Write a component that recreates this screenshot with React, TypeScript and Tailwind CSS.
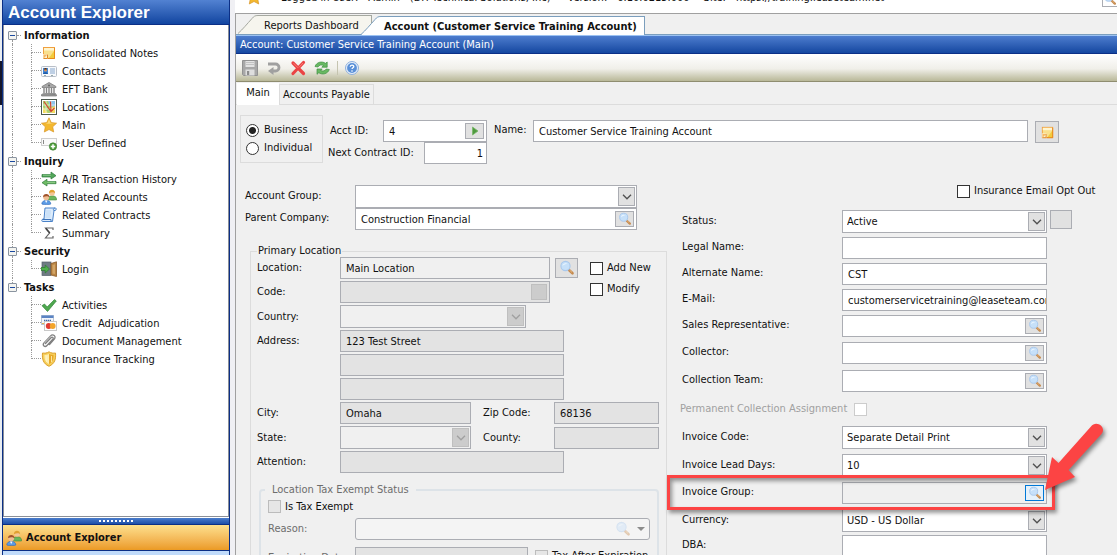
import React, { type ReactNode } from "react";

/* ---------- icons ---------- */

function Svg({ children, className = "size-4", box = "0 0 16 16" }: { children: ReactNode; className?: string; box?: string }) {
  return (
    <svg viewBox={box} className={`${className} shrink-0`} fill="none" aria-hidden="true">
      {children}
    </svg>
  );
}

const NoteIcon = ({ className }: { className?: string }) => (
  <Svg className={className}>
    <rect x="2" y="2" width="12" height="12" fill="#f0a040" />
    <rect x="3" y="3" width="10" height="10" fill="#f9e08c" />
    <rect x="3" y="3" width="10" height="2.5" fill="#fff5cf" />
    <path d="M13 6v7H8z" fill="#f2cb3c" />
    <path d="M2 9h5v5H2z" fill="#fbf1d0" />
    <path d="M2.5 9.5h4l-4 4z" fill="#f6b862" />
    <path d="M6.5 9.500v4h-4" stroke="#e08a28" />
    <path d="M13.500 3v10.500H7" stroke="#e88a1c" />
  </Svg>
);

const CardIcon = () => (
  <Svg>
    <rect x="0.500" y="3.500" width="15" height="10" rx="1" fill="#f7f9fc" stroke="#b9bfc8" />
    <rect x="2" y="5" width="5" height="6" fill="#3f87d8" />
    <circle cx="4.500" cy="7" r="1.600" fill="#d48d55" />
    <path d="M3 6.500c0-2 3-2 3 0" fill="#5d3418" />
    <path d="M2 11c.5-2.500 4.500-2.500 5 0z" fill="#1e5cab" />
    <path d="M9 6h5M9 8h5M9 10h5" stroke="#86a6cc" />
    <path d="M3 12.500h2M10 12.500h2" stroke="#9aa" />
  </Svg>
);

const BankIcon = () => (
  <Svg>
    <path d="M8 1.500 15 5.500v1H1v-1z" fill="#a8a8a8" stroke="#7d7d7d" strokeWidth=".8" />
    <circle cx="8" cy="4.500" r="1" fill="#666" />
    <path d="M3 7v5M5.500 7v5M8 7v5M10.500 7v5M13 7v5" stroke="#858585" strokeWidth="1.400" />
    <path d="M1.500 12.500h13v1H.5v1.500h15v-1.500" fill="#999" stroke="#777" strokeWidth=".7" />
  </Svg>
);

const MapIcon = () => (
  <Svg>
    <rect x="0.500" y="0.500" width="15" height="15" fill="#fff" stroke="#4d5a50" />
    <rect x="2" y="2" width="12" height="12" fill="#a9cf72" />
    <path d="M7 2h7v6L9 7z" fill="#8fc5ea" />
    <path d="M2 8l5 6H2zM9 9l5-2v7h-3z" fill="#f2dc60" />
    <path d="M5 2v12M10 2v12M2 6h12M2 10h12" stroke="#fff" strokeWidth=".6" />
    <path d="M3 2.500l7 10 3.500-3.500M9.500 2.500l.5 10" stroke="#d2472f" strokeWidth="1.200" />
  </Svg>
);

const StarIcon = () => (
  <Svg>
    <path d="M8 .8 10.300 5.600l5.300.6-3.900 3.600 1 5.200L8 12.500 3.300 15l1-5.200L.4 6.200l5.300-.6z" fill="#f3b82e" stroke="#d9962a" strokeWidth=".7" />
    <path d="M8 2.300 9.700 6.300l3.800.5H4.500l2-.8z" fill="#fbd978" />
  </Svg>
);

const FieldAddIcon = () => (
  <Svg>
    <rect x="0.500" y="3.500" width="15" height="7" fill="#fafafa" stroke="#cfcfcf" />
    <path d="M2.500 5v4" stroke="#888" />
    <circle cx="12" cy="11.500" r="3.700" fill="#4f9e3c" stroke="#35762a" strokeWidth=".6" />
    <path d="M12 9.300v4.400M9.800 11.500h4.400" stroke="#fff" strokeWidth="1.500" />
  </Svg>
);

const TransferIcon = () => (
  <Svg>
    <path d="M1 3.500h9V1l5 3.700-5 3.300V6H1z" fill="#52a75a" stroke="#2f7a3c" strokeWidth=".7" />
    <path d="M15 10.500H6V8.300L1 11.700l5 3.300v-2.300h9z" fill="#6dbb63" stroke="#2f7a3c" strokeWidth=".7" />
    <path d="M2 4.200h8M6 11.200h8" stroke="#a5dda0" strokeWidth=".7" />
  </Svg>
);

const PeopleIcon = () => (
  <Svg>
    <path d="M6.500 10c0-4 9-4.500 9 0v1h-8z" fill="#6cb55c" stroke="#458b3c" strokeWidth=".6" />
    <circle cx="11" cy="4" r="2.800" fill="#f4c596" />
    <path d="M8 4.200C7.500-.3 14.500-.3 14 4.200c-1-1.500-4-1.200-6 0z" fill="#e0a030" />
    <path d="M.8 15c0-5 9-5 9 0 0 .7-9 .7-9 0z" fill="#5b9be6" stroke="#2f68b5" strokeWidth=".6" />
    <path d="M4 11.500h2.500L5.200 14z" fill="#fff" />
    <circle cx="5.200" cy="8.300" r="2.900" fill="#efbd93" />
    <path d="M2.100 8.300C1.700 4 8.800 4 8.300 8.300c-1-1.500-4-1.500-6.200 0z" fill="#a0522a" />
  </Svg>
);

const ScrollIcon = () => (
  <Svg>
    <path d="M4 1h10.500c1 0 1 2.500-.5 2.500h-1L11.500 14.500H1.500c-1 0-1-2 .5-2.500H3z" fill="#dcecfc" stroke="#4a82c8" />
    <path d="M12.500 3.500C12 2 13 1 14 1" stroke="#4a82c8" />
    <path d="M5 4h5M5 6h5M4.500 8h5M4.500 10h5" stroke="#b5d4f2" strokeWidth=".8" />
    <path d="M1.500 12.500h8.500v1.500" stroke="#3f74ba" />
  </Svg>
);

const SigmaIcon = () => (
  <Svg>
    <path d="M12 5V3H4.500l4 5-4 5H12v-2" stroke="#666" strokeWidth="1.200" />
    <path d="M4.800 3.200l4 4.800" stroke="#444" strokeWidth="1.500" />
  </Svg>
);

const DoorIcon = () => (
  <Svg>
    <rect x="1" y="1" width="9" height="13.500" fill="#6f7c84" stroke="#55606a" strokeWidth=".7" />
    <path d="M10 2.500 15.500.8v14.700L10 14z" fill="#b98545" stroke="#8a5a28" strokeWidth=".8" />
    <path d="M11.500 4l2.500-.7v9.800l-2.500-.6z" fill="#d3a566" />
    <path d="M0 6.500h4.200V4l4.300 4-4.300 4V9.500H0z" fill="#4fae4c" stroke="#2c7a30" strokeWidth=".7" />
  </Svg>
);

const CheckIcon = () => (
  <Svg>
    <path d="M1 8.700 3.500 7l2.700 3L13.500 2.500 15.300 4 6.500 14.500z" fill="#4fa84f" stroke="#2f8238" strokeWidth=".7" />
  </Svg>
);

const CreditIcon = () => (
  <Svg>
    <rect x="0.500" y="0.500" width="12" height="9" fill="#f3f6fb" stroke="#b9c4d6" />
    <rect x="0.500" y="0.500" width="12" height="2.500" fill="#5b84c4" />
    <path d="M3 5.500h7" stroke="#3d66a8" strokeWidth="1.400" strokeDasharray="1.300 .6" />
    <path d="M1 8.500h11" stroke="#e8b34a" />
    <rect x="3.500" y="6.500" width="12" height="9" fill="#fff" stroke="#c9c9c9" />
    <circle cx="7.700" cy="11" r="2.900" fill="#e23b32" />
    <circle cx="11.700" cy="11" r="2.900" fill="#f3a52c" />
  </Svg>
);

const ClipIcon = () => (
  <Svg>
    <path d="M4.500 10.500 10 4.800c1.500-1.500 3 .2 1.800 1.500L6 12.500c-2.200 2.300-5-.3-3-2.600l6.300-6.800c2.800-2.800 6.300.2 4 3L8.500 11.500" stroke="#808080" strokeWidth="1.300" strokeLinecap="round" />
    <path d="M3.500 9.500 9.700 3" stroke="#c8c8c8" strokeWidth=".6" />
  </Svg>
);

const ShieldIcon = () => (
  <Svg>
    <path d="M8 .8c2 1.400 4.500 1.600 6.500 1.200.5 6-.5 10.500-6.500 13.300C2 12.500 1 8 1.500 2 3.500 2.400 6 2.200 8 .8z" fill="#f6cf5a" stroke="#dca02c" />
    <path d="M8 3c1.500.9 3 1.200 4.500 1.100.2 4-.7 7-4.500 9z" fill="#e7a829" />
    <path d="M8 3C6.500 3.900 5 4.200 3.500 4.100c-.2 4 .7 7 4.500 9z" fill="#fdeeb0" />
    <path d="M5.500 5v6M10.500 5v6" stroke="#fff3c0" strokeWidth=".8" />
  </Svg>
);

const LensIcon = ({ className }: { className?: string }) => (
  <Svg className={className}>
    <path d="M10 10 13.500 13.300" stroke="#c58a4e" strokeWidth="2.600" strokeLinecap="round" />
    <path d="M10.500 10 13 12.400" stroke="#e9bd88" strokeWidth=".9" />
    <circle cx="6.500" cy="6" r="4.600" fill="#c6e0f9" stroke="#a9c8ec" strokeWidth="1.100" />
    <path d="M3.500 6c.3-3 3.500-3.500 5-2-2 0-3.500.5-5 2z" fill="#eaf5ff" />
  </Svg>
);

const ChevronIcon = ({ muted }: { muted?: boolean }) => (
  <Svg className="h-[6px] w-[10px]" box="0 0 10 6">
    <path d="M1 .8 5 4.800 9 .8" stroke={muted ? "#a0a0a0" : "#505050"} strokeWidth="1.300" />
  </Svg>
);

const PlayIcon = () => (
  <Svg className="h-[10px] w-[8px]" box="0 0 8 10">
    <path d="M1.500 1v8L7 5z" fill="#4f9a3f" stroke="#7ab86a" strokeWidth=".8" />
  </Svg>
);

const SaveIcon = () => (
  <Svg>
    <path d="M.5.5h15v15h-14l-1-1z" fill="#a8a8a8" stroke="#929292" />
    <rect x="3.500" y="1" width="9" height="6" fill="#e3e3e3" />
    <path d="M4 2.500h8M4 4.500h8" stroke="#c2c2c2" />
    <rect x="3.500" y="9.500" width="9" height="6" fill="#dedede" />
    <rect x="5" y="11" width="2.200" height="4" fill="#8c8c8c" />
  </Svg>
);

const UndoIcon = () => (
  <Svg>
    <path d="M2 4h7.500a3.500 3.500 0 0 1 0 7H6" stroke="#a0a0a0" strokeWidth="2.800" />
    <path d="M7.500 7v8L2 11z" fill="#a0a0a0" />
  </Svg>
);

const DeleteIcon = () => (
  <Svg>
    <path d="M3 3l10.500 10.500M13.500 2.500 3 13.500" stroke="#ea4444" strokeWidth="3.200" strokeLinecap="round" />
    <path d="M3.500 3.200 8 7.800M13 3l-4 4.300" stroke="#ff8a84" strokeWidth=".8" />
  </Svg>
);

const RefreshIcon = () => (
  <Svg>
    <path d="M1 6.500C2.500 2 8 .8 11.500 3.300L13.200 2v5.200H7.800L9.500 5.500C7.500 4.500 5 5 4 7z" fill="#68b862" stroke="#3f9044" strokeWidth=".7" />
    <path d="M15.300 9.500c-1.500 4.500-7 5.700-10.500 3.200L3 14.300V9h5.200l-1.500 1.500c2 1 4.500.5 5.500-1.500z" fill="#68b862" stroke="#3f9044" strokeWidth=".7" />
  </Svg>
);

const HelpIcon = () => (
  <Svg>
    <circle cx="8" cy="8" r="6.500" fill="#e4eefa" stroke="#8fb0dd" />
    <circle cx="8" cy="8" r="4.900" fill="#5a90d8" />
    <path d="M6.200 6.800c0-2.300 3.600-2.300 3.600-.2 0 1.200-1.800 1.200-1.800 2.500" stroke="#fff" strokeWidth="1.300" />
    <circle cx="8" cy="11" r=".8" fill="#fff" />
  </Svg>
);

/* ---------- navigation tree ---------- */

const tree = [
  {
    title: "Information",
    items: [
      { label: "Consolidated Notes", icon: <NoteIcon /> },
      { label: "Contacts", icon: <CardIcon /> },
      { label: "EFT Bank", icon: <BankIcon /> },
      { label: "Locations", icon: <MapIcon /> },
      { label: "Main", icon: <StarIcon /> },
      { label: "User Defined", icon: <FieldAddIcon /> },
    ],
  },
  {
    title: "Inquiry",
    items: [
      { label: "A/R Transaction History", icon: <TransferIcon /> },
      { label: "Related Accounts", icon: <PeopleIcon /> },
      { label: "Related Contracts", icon: <ScrollIcon /> },
      { label: "Summary", icon: <SigmaIcon /> },
    ],
  },
  { title: "Security", items: [{ label: "Login", icon: <DoorIcon /> }] },
  {
    title: "Tasks",
    items: [
      { label: "Activities", icon: <CheckIcon /> },
      { label: "Credit  Adjudication", icon: <CreditIcon /> },
      { label: "Document Management", icon: <ClipIcon /> },
      { label: "Insurance Tracking", icon: <ShieldIcon /> },
    ],
  },
];

function Tree() {
  return (
    <ul className="pt-px">
      {tree.map((group, g) => {
        const firstGroup = g === 0;
        const lastGroup = g === tree.length - 1;
        return (
          <li key={group.title}>
            <div className="flex h-[18px] items-center">
              <div className="ml-[4px] flex w-[9px] flex-col items-center self-stretch">
                <span className={`flex-1 border-l border-dotted ${firstGroup ? "border-transparent" : "border-[#9a9a9a]"}`} />
                <button aria-label={`Collapse ${group.title}`} className="flex size-[9px] items-center justify-center rounded-[1px] border border-[#8a94a0] bg-[#f4f4f0]">
                  <span className="h-px w-[5px] bg-[#1c4aa0]" />
                </button>
                <span className={`flex-1 border-l border-dotted ${lastGroup ? "border-transparent" : "border-[#9a9a9a]"}`} />
              </div>
              <span className="mr-[3px] w-[4px] border-t border-dotted border-[#9a9a9a]" />
              <span className="pt-px font-bold">{group.title}</span>
            </div>
            <ul>
              {group.items.map((item, i) => (
                <li key={item.label} className="flex h-[18px] items-center">
                  <span className={`ml-[8px] w-[19px] self-stretch border-l border-dotted ${lastGroup ? "border-transparent" : "border-[#9a9a9a]"}`} />
                  <span className="flex w-[10px] flex-col self-stretch">
                    <span className="h-1/2 border-b border-l border-dotted border-[#9a9a9a]" />
                    {i < group.items.length - 1 && <span className="h-1/2 border-l border-dotted border-[#9a9a9a]" />}
                  </span>
                  <a href="#" className="flex items-center gap-[5px] whitespace-pre">
                    {item.icon}
                    <span className="pt-px">{item.label}</span>
                  </a>
                </li>
              ))}
            </ul>
          </li>
        );
      })}
    </ul>
  );
}

function Sidebar() {
  return (
    <aside className="flex w-[228px] shrink-0 flex-col border-x border-[#0b2f86] bg-white">
      <h1 className="h-[25px] border-b border-[#0b2f86] bg-linear-to-b from-[#5282d2] to-[#1145a0] pl-[5px] font-['Liberation_Sans',sans-serif] text-[17px] leading-[26px] font-bold text-white">
        Account Explorer
      </h1>
      <nav className="min-h-0 flex-1 overflow-hidden border border-t-0 border-[#8a8f98]">
        <Tree />
      </nav>
      <div className="mt-px flex h-[7px] items-center justify-center gap-[2px] border-b border-[#0b2f86] bg-linear-to-b from-[#4a7ccc] to-[#1d4fa8]">
        {Array.from({ length: 9 }, (_, i) => (
          <span key={i} className="size-[2px] bg-white" />
        ))}
      </div>
      <button className="flex h-[26px] items-center gap-[4px] border-b border-[#0b2f86] bg-linear-to-b from-[#fde08c] to-[#eb9a22] pl-[3px] text-left font-bold">
        <PeopleIcon />
        <span className="pt-px">Account Explorer</span>
      </button>
      <div className="h-[4px] bg-[#c0dbfb]" />
    </aside>
  );
}

/* ---------- form controls ---------- */

const boxBase = "flex items-center border border-[#abadb3]";

function TextBox({ id, value = "", className = "", tone = "white", button, alignRight, label }: {
  id: string; value?: string; className?: string; tone?: "white" | "plain" | "gray"; button?: ReactNode; alignRight?: boolean; label?: string;
}) {
  const bg = tone === "white" ? "bg-white" : tone === "plain" ? "bg-[#f0f0f0]" : "bg-[#e3e3e3]";
  return (
    <div className={`${boxBase} h-[22px] ${bg} ${className}`}>
      <input
        id={id}
        aria-label={label}
        defaultValue={value}
        className={`h-full w-full min-w-0 flex-1 bg-transparent outline-none ${alignRight ? "pr-[3px] text-right" : "pl-[5px]"}`}
      />
      {button}
    </div>
  );
}

function Combo({ id, value = "", className = "", disabled }: { id: string; value?: string; className?: string; disabled?: boolean }) {
  return (
    <div className={`relative h-[23px] border border-[#abadb3] ${disabled ? "bg-[#f0f0f0]" : "bg-white"} ${className}`}>
      <select id={id} disabled={disabled} className="size-full appearance-none bg-transparent pl-[4px] opacity-100 outline-none">
        <option>{value}</option>
      </select>
      <span className={`pointer-events-none absolute inset-y-px right-px flex w-[17px] items-center justify-center border ${disabled ? "border-[#bfbfbf] bg-[#cccccc]" : "border-[#abadb3] bg-[#e1e1e1]"}`}>
        <ChevronIcon muted={disabled} />
      </span>
    </div>
  );
}

function LensButton({ label, active }: { label: string; active?: boolean }) {
  return (
    <button type="button" aria-label={label} className={`mr-[2px] flex h-[16px] w-[19px] shrink-0 items-center justify-center border ${active ? "border-[#0078d7] bg-[#e5f1fb]" : "border-[#abadb3] bg-[#e1e1e1]"}`}>
      <LensIcon className="size-[14px]" />
    </button>
  );
}

function Check({ id, label, disabled }: { id: string; label: string; disabled?: boolean }) {
  return (
    <label htmlFor={id} className="flex items-center gap-[4px] whitespace-nowrap">
      <input id={id} type="checkbox" className={`size-[13px] appearance-none border ${disabled ? "border-[#bcbcbc] bg-[#e6e6e6]" : "border-[#333] bg-white"}`} />
      {label}
    </label>
  );
}

function Row({ id, label, labelWidth, children, className = "" }: { id: string; label: string; labelWidth: string; children: ReactNode; className?: string }) {
  return (
    <div className={`flex items-center ${className}`}>
      <label htmlFor={id} className={`${labelWidth} shrink-0 whitespace-nowrap`}>
        {label}
      </label>
      {children}
    </div>
  );
}

/* ---------- form sections ---------- */

function AccountHeader() {
  return (
    <div className="flex pt-[10px] pr-[58px] pl-[4px]">
      <fieldset className="flex h-[48px] w-[83px] shrink-0 flex-col justify-center gap-[4px] border border-[#dcdcdc] pl-[5px]">
        {["Business", "Individual"].map((name, i) => (
          <label key={name} className="flex h-[14px] items-center gap-[5px]">
            <input
              type="radio"
              name="kind"
              defaultChecked={i === 0}
              className="size-[13px] appearance-none rounded-full border border-[#333] bg-white checked:bg-[radial-gradient(circle,#222_3px,#fff_4px)]"
            />
            {name}
          </label>
        ))}
      </fieldset>
      <div className="ml-[5px] w-[159px] shrink-0 pt-[5px]">
        <Row id="acct" label="Acct ID:" labelWidth="w-[55px] pl-[2px]">
          <TextBox
            id="acct"
            value="4"
            className="flex-1"
            button={
              <button type="button" aria-label="Next account" className="mr-[2px] flex h-[16px] w-[19px] items-center justify-center border border-[#abadb3] bg-[#e1e1e1]">
                <PlayIcon />
              </button>
            }
          />
        </Row>
        <Row id="next" label="Next Contract ID:" labelWidth="w-[96px]">
          <TextBox id="next" value="1" alignRight className="flex-1" />
        </Row>
      </div>
      <div className="ml-[7px] flex flex-1 items-start pt-[5px]">
        <Row id="name" label="Name:" labelWidth="w-[39px] pb-[2px]" className="flex-1">
          <TextBox id="name" value="Customer Service Training Account" className="flex-1" />
        </Row>
        <button type="button" aria-label="Notes" className="mt-px ml-[7px] flex h-[22px] w-[24px] shrink-0 items-center justify-center border border-[#abadb3] bg-[#e1e1e1]">
          <NoteIcon className="size-[15px]" />
        </button>
      </div>
    </div>
  );
}

function PrimaryLocation() {
  const lw = "w-[83px]";
  return (
    <fieldset className="ml-[14px] h-[320px] w-[417px] border border-[#dcdcdc] pl-[6px]">
      <legend className="h-[12px] px-px leading-[12px] whitespace-nowrap">Primary Location</legend>
      <div className="flex flex-col gap-[2px]">
        <div className="flex">
          <div className="flex flex-col gap-[2px]">
            <Row id="location" label="Location:" labelWidth={lw}>
              <TextBox id="location" value="Main Location" tone="plain" className="w-[210px]" />
            </Row>
            <Row id="code" label="Code:" labelWidth={lw}>
              <TextBox id="code" tone="gray" className="w-[210px]" button={<span className="mr-[2px] size-[16px] shrink-0 border border-[#bfbfbf] bg-[#cccccc]" />} />
            </Row>
          </div>
          <button type="button" aria-label="Find location" className="mt-px ml-[5px] flex h-[20px] w-[23px] items-center justify-center border border-[#abadb3] bg-[#e1e1e1]">
            <LensIcon />
          </button>
          <div className="ml-[12px] flex flex-col gap-[7px] pt-[4px]">
            <Check id="addnew" label="Add New" />
            <Check id="modify" label="Modify" />
          </div>
        </div>
        <Row id="country" label="Country:" labelWidth={lw}>
          <Combo id="country" disabled className="w-[186px]" />
        </Row>
        <Row id="addr1" label="Address:" labelWidth={lw}>
          <TextBox id="addr1" value="123 Test Street" tone="gray" className="w-[224px]" />
        </Row>
        <TextBox id="addr2" label="Address line 2" tone="gray" className="ml-[83px] w-[224px]" />
        <TextBox id="addr3" label="Address line 3" tone="gray" className="ml-[83px] w-[224px]" />
        <div className="flex gap-[12px]">
          <Row id="city" label="City:" labelWidth={lw}>
            <TextBox id="city" value="Omaha" tone="gray" className="w-[131px]" />
          </Row>
          <Row id="zip" label="Zip Code:" labelWidth="w-[71px]">
            <TextBox id="zip" value="68136" tone="gray" className="w-[105px]" />
          </Row>
        </div>
        <div className="flex gap-[12px]">
          <Row id="state" label="State:" labelWidth={lw}>
            <Combo id="state" disabled className="w-[131px]" />
          </Row>
          <Row id="county" label="County:" labelWidth="w-[71px]">
            <TextBox id="county" tone="gray" className="w-[105px]" />
          </Row>
        </div>
        <Row id="attention" label="Attention:" labelWidth={lw}>
          <TextBox id="attention" tone="gray" className="w-[224px]" />
        </Row>
      </div>

      <fieldset className="mt-[11px] ml-[2px] h-[100px] w-[400px] rounded-[4px] border-2 border-[#dde3e8] pl-[7px]">
        <legend className="ml-[-3px] h-[12px] px-[7px] leading-[12px] whitespace-nowrap text-[#6d6d6d]">Location Tax Exempt Status</legend>
        <div className="flex h-[20px] items-center pt-px">
          <Check id="exempt" label="Is Tax Exempt" disabled />
        </div>
        <Row id="reason" label="Reason:" labelWidth="w-[87px] text-[#6d6d6d]" className="pt-[2px]">
          <div className="flex h-[22px] w-[295px] items-center rounded-[3px] border border-[#abadb3] bg-[#f4f4f4] pr-[4px]">
            <input id="reason" className="h-full min-w-0 flex-1 bg-transparent outline-none" />
            <span className="opacity-40">
              <LensIcon />
            </span>
            <span className="ml-[6px] border-x-4 border-t-4 border-x-transparent border-t-[#8c8c8c]" />
          </div>
        </Row>
        <div className="flex items-start pt-[7px]">
          <Row id="expires" label="Expiration Date:" labelWidth="w-[87px] text-[#6d6d6d]">
            <TextBox id="expires" tone="gray" className="w-[173px]" />
          </Row>
          <div className="pt-[2px] pl-[7px]">
            <Check id="taxafter" label="Tax After Expiration" disabled />
          </div>
        </div>
      </fieldset>
    </fieldset>
  );
}

function Callout() {
  return (
    <>
      <div className="pointer-events-none absolute -top-[7px] -right-[8px] -bottom-[6px] -left-[15px] border-3 border-[#fc4444] shadow-[2px_3px_4px_rgba(0,0,0,0.4),inset_2px_3px_4px_rgba(0,0,0,0.4)]" />
      <svg viewBox="0 0 70 84" className="pointer-events-none absolute right-[-68px] bottom-[4px] h-[84px] w-[70px] drop-shadow-[2px_3px_2px_rgba(0,0,0,0.45)]" aria-hidden="true">
        <path d="M0 74 7 41 13.500 47 46 10.500C51 3.500 62 11 56.500 18L23.500 54 30 61z" fill="#fc4444" />
      </svg>
    </>
  );
}

function Details() {
  const lw = "w-[160px] pb-[2px]";
  const box = "w-[205px]";
  return (
    <section className="ml-[15px] w-[440px] pt-[20px]">
      <div className="flex h-[26px] items-start pl-[275px]">
        <Check id="optout" label="Insurance Email Opt Out" />
      </div>
      <div className="flex flex-col gap-[4px]">
        <Row id="status" label="Status:" labelWidth={lw}>
          <Combo id="status" value="Active" className={box} />
          <button type="button" aria-label="Status details" className="ml-[3px] h-[19px] w-[22px] self-start border border-[#abadb3] bg-[#e1e1e1]" />
        </Row>
        <Row id="legal" label="Legal Name:" labelWidth={lw}>
          <TextBox id="legal" className={box} />
        </Row>
        <Row id="alt" label="Alternate Name:" labelWidth={lw}>
          <TextBox id="alt" value="CST" className={box} />
        </Row>
        <Row id="email" label="E-Mail:" labelWidth={lw}>
          <TextBox id="email" value="customerservicetraining@leaseteam.com" className={box} />
        </Row>
        <Row id="rep" label="Sales Representative:" labelWidth={lw}>
          <TextBox id="rep" className={box} button={<LensButton label="Find sales representative" />} />
        </Row>
      </div>
      <div className="mt-[5px] flex flex-col gap-[6px]">
        <Row id="collector" label="Collector:" labelWidth={lw}>
          <TextBox id="collector" className={box} button={<LensButton label="Find collector" />} />
        </Row>
        <Row id="team" label="Collection Team:" labelWidth={lw}>
          <TextBox id="team" className={box} button={<LensButton label="Find collection team" />} />
        </Row>
        <div className="-ml-[2px] flex h-[22px] items-center text-[#a0a0a0]">
          <label htmlFor="permanent" className="w-[174px] whitespace-nowrap">Permanent Collection Assignment</label>
          <input id="permanent" type="checkbox" disabled className="size-[13px] appearance-none border border-[#cccccc] bg-white" />
        </div>
      </div>
      <div className="mt-[6px] flex flex-col gap-[5px]">
        <Row id="invcode" label="Invoice Code:" labelWidth={lw}>
          <Combo id="invcode" value="Separate Detail Print" className={box} />
        </Row>
        <Row id="lead" label="Invoice Lead Days:" labelWidth={lw}>
          <Combo id="lead" value="10" className={box} />
        </Row>
        <div className="relative z-10 w-[365px]">
          <Row id="group" label="Invoice Group:" labelWidth={lw}>
            <TextBox id="group" tone="plain" className={box} button={<LensButton label="Find invoice group" active />} />
          </Row>
          <Callout />
        </div>
        <Row id="currency" label="Currency:" labelWidth={lw}>
          <Combo id="currency" value="USD - US Dollar" className={box} />
        </Row>
      </div>
      <Row id="dba" label="DBA:" labelWidth={lw} className="mt-[3px]">
        <TextBox id="dba" className={box} />
      </Row>
    </section>
  );
}

/* ---------- chrome ---------- */

function TabSlope({ fill, stroke }: { fill: string; stroke: string }) {
  return (
    <svg viewBox="0 0 20 19" className="h-[19px] w-[20px] shrink-0" aria-hidden="true">
      <path d="M0 19C5 14 9 9 14 3.500 16 1.200 17 .5 20 .5V19z" fill={fill} />
      <path d="M0 18.500C5 14 9 9 14 3.500 16 1.200 17 .5 20 .5" fill="none" stroke={stroke} />
    </svg>
  );
}

function DocumentTabs() {
  return (
    <div role="tablist" className="flex h-[21px] shrink-0 items-end border-b border-[#7b9ebd] bg-[#f0f0f0] pl-[2px]">
      <button role="tab" aria-selected="false" className="flex">
        <TabSlope fill="#f6f5ee" stroke="#a5a8a0" />
        <span className="h-[19px] w-[114px] border-t border-r border-[#a5a8a0] bg-[#f6f5ee] pl-[6px] text-left leading-[20px] whitespace-nowrap">Reports Dashboard</span>
      </button>
      <button role="tab" aria-selected="true" className="relative -mb-px -ml-[11px] flex">
        <TabSlope fill="#fff" stroke="#7b9ebd" />
        <span className="h-[19px] border-t border-r border-[#7b9ebd] bg-white pr-[7px] pl-[3px] leading-[20px] font-bold whitespace-nowrap">
          Account (Customer Service Training Account)
        </span>
      </button>
    </div>
  );
}

function Toolbar() {
  return (
    <div role="toolbar" className="flex h-[28px] shrink-0 items-center gap-[8px] border-b border-[#8f8d70] bg-linear-to-b from-white via-[#f0efe9] via-55% to-[#b9b898] pl-[6px]">
      <button aria-label="Save"><SaveIcon /></button>
      <button aria-label="Undo"><UndoIcon /></button>
      <button aria-label="Delete"><DeleteIcon /></button>
      <button aria-label="Refresh"><RefreshIcon /></button>
      <span className="-mr-[2px] -ml-px h-[14px] border-l border-[#c5c4b0]" />
      <button aria-label="Help"><HelpIcon /></button>
    </div>
  );
}

export default function App() {
  return (
    <div className="flex h-screen overflow-hidden bg-[#f0f0f0] font-['DejaVu_Sans_Condensed','Noto_Sans',sans-serif] text-[11px] leading-[14px] text-[#111]">
      <div className="w-[2px] shrink-0 bg-[#e9edf2] pt-[61px]">
        <div className="h-[44px] bg-[#15172b]" />
      </div>
      <Sidebar />
      <div className="w-[5px] shrink-0 bg-[#f0f0f4]" />
      <main className="flex min-w-0 flex-1 flex-col">
        <div className="flex h-[13px] shrink-0 items-end gap-[13px] overflow-hidden bg-white pb-[8px] pl-[11px] whitespace-nowrap">
          <StarIcon />
          <div className="flex gap-[10px] pl-[6px]">
            <span>Logged in User:</span>
            <span>Admin</span>
            <span>(DH Technical Solutions, Inc)</span>
          </div>
          <div className="flex gap-[10px] pl-[4px]">
            <span>Version:</span>
            <span>6.10.0215.000</span>
          </div>
          <div className="flex gap-[10px] pl-px">
            <span>Site:</span>
            <span>https://training.leaseteam.net</span>
          </div>
          <button aria-label="Search" className="-mb-[2px] ml-auto h-[20px] w-[15px] border border-r-0 border-[#abadb3] bg-white">
            <LensIcon className="mt-[4px] size-[14px]" />
          </button>
        </div>
        <div className="flex min-h-0 flex-1 flex-col border-t border-l border-[#a0a0a0]">
          <DocumentTabs />
          <h2 className="h-[19px] shrink-0 border-t border-b border-t-[#9cc2f2] border-b-[#0b2f86] bg-linear-to-b from-[#4d7dce] to-[#1447a0] pl-[4px] leading-[17px] text-white">
            Account: Customer Service Training Account (Main)
          </h2>
          <Toolbar />
          <div role="tablist" className="flex h-[23px] shrink-0 items-end border-b border-[#dcdcdc] pl-px">
            <button role="tab" aria-selected="true" className="-mb-px h-[22px] w-[42px] bg-white pb-[2px]">Main</button>
            <button role="tab" aria-selected="false" className="h-[20px] border border-b-0 border-[#dcdcdc] px-[3px] pt-px whitespace-nowrap">Accounts Payable</button>
          </div>
          <form className="min-h-0 flex-1 overflow-hidden">
            <AccountHeader />
            <div className="flex">
              <div className="w-[431px] shrink-0 pt-[21px]">
                <div className="pl-[9px]">
                  <Row id="acctgroup" label="Account Group:" labelWidth="w-[110px] pb-[2px]">
                    <Combo id="acctgroup" className="w-[282px]" />
                  </Row>
                  <Row id="parent" label="Parent Company:" labelWidth="w-[110px] pb-[2px]">
                    <TextBox id="parent" value="Construction Financial" className="w-[282px]" button={<LensButton label="Find parent company" />} />
                  </Row>
                </div>
                <div className="pt-[15px]">
                  <PrimaryLocation />
                </div>
              </div>
              <Details />
            </div>
          </form>
        </div>
      </main>
    </div>
  );
}
